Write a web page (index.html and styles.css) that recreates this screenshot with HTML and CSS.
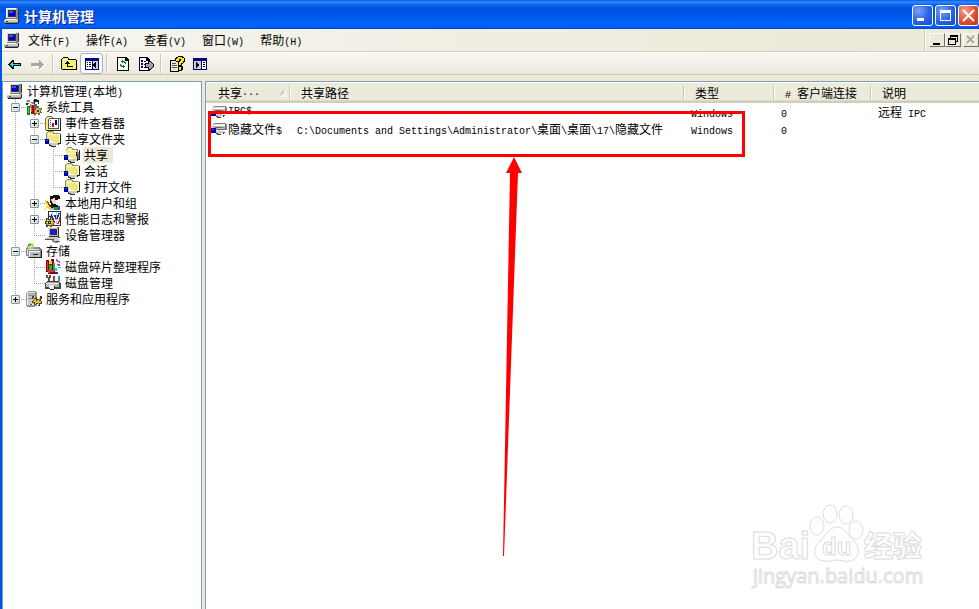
FILE: index.html
```
<!DOCTYPE html>
<html lang="zh-CN">
<head>
  <meta charset="UTF-8">
  <meta name="viewport" content="width=device-width, initial-scale=1.0">
  <title>计算机管理</title>
  <link rel="stylesheet" href="styles.css">
</head>
<body>

  <!-- 图标库 -->
  <svg class="sprite" aria-hidden="true">
    <defs>
      <symbol id="i-computer" viewBox="0 0 16 16">
        <path fill="#d4d0c8" d="M2 0h11v10H2z"/><path fill="#fff" d="M2 0h10v1H3v9H2z"/><path fill="#888" d="M12 1h2v9h-2z"/>
        <path fill="#333" d="M4 2h8v7H4zM14 1h1v9h-1z"/><path fill="#0000d8" d="M5 3h6v5H5z"/><path fill="#4848ff" d="M5 3h4v2H5z"/>
        <path fill="#777" d="M3 10h11v1H3z"/><path fill="#c8c8c8" d="M1 11h13v3H0v-2h1z"/><path fill="#fff" d="M1 11h11v1H1z"/><path fill="#888" d="M0 14h14v1H0z"/><path fill="#222" d="M14 11h1v4h-1zM1 15h13v1H1z"/><path fill="#008000" d="M2 13h2v1H2z"/>
      </symbol>
      <symbol id="i-tools" viewBox="0 0 16 16">
        <path fill="#888" d="M1 1h3v2h3V1h3v1H8v3H6v4H4V5H2V3H0V2h1z"/><path fill="#e4e4e4" d="M2 3h3v1h1v3H5V5H3z"/>
        <path fill="#222" d="M8 0h3v1h2v4h-1V3H9v3H8zM0 4h2v2H0z"/><path fill="#666" d="M8 5h3v4H8z"/><path fill="#008a20" d="M1 7h3v9H1z"/><path fill="#30e040" d="M2 8h1v6H2z"/>
        <path fill="#c00000" d="M5 6h3v9H5z"/><path fill="#ff4040" d="M5 6h1v7H5z"/><path fill="#665" d="M9 8h2V7h2v2h3v2h-1v2h1v1h-2v2h-2v-1h-2v1H8v-7h1z"/><path fill="#d8c040" d="M10 9h3v1h2v1h-1v3h-2v1h-1v-1H9v-3h1z"/><path fill="#333" d="M11 11h2v2h-2z"/>
      </symbol>
      <symbol id="i-events" viewBox="0 0 16 16">
        <path fill="#777" d="M2 1h5l1 2h7v1H1V2h1z"/><path fill="#f4ee70" d="M2 2h5l1 2h6v11H1V3h1z"/><path fill="#222" d="M15 3h1v13H1v-1h14z"/>
        <path fill="#777" d="M0 3h1v12H0z"/><path fill="#fff" d="M4 4h9v9H4z"/><path fill="#555" d="M3 4h1v9h9V4h1v10H3zM4 3h9v1H4zM5 5h1v1H5zM5 7h1v1H5zM5 9h1v1H5zM5 11h1v1H5z"/><path fill="#d00000" d="M7 8h2v4H7z"/><path fill="#0000c0" d="M10 5h2v5h-2z"/>
      </symbol>
      <symbol id="i-folder" viewBox="0 0 16 16">
        <path fill="#888" d="M3 0h5v1h1v1h6v1H1V2h1V1h1zM1 3h1v7H1z"/><path fill="#f0e878" d="M3 1h5v2h6v9H2V2h1z"/><path fill="#222" d="M15 3h1v10H7v-1h8z"/><path fill="#fff" d="M3 3h11v1H3z"/>
        <path fill="#0000a8" d="M0 8h4v5H0z"/><path fill="#2050ff" d="M1 9h2v1H1z"/><path fill="#c8c8c8" d="M4 10h3v1h3v1h3v2h-2v1H7v-1H5v-1H4z"/><path fill="#fff" d="M5 10h2v1h3v1H5z"/><path fill="#333" d="M4 13h1v1h2v1h4v1H6v-1H4zM13 13h1v1h-1z"/>
      </symbol>
      <symbol id="i-open" viewBox="0 0 16 16">
        <path fill="#888" d="M3 0h5v1h1v1h5v3h1v8H2V2h1z"/><path fill="#f0e878" d="M3 1h5v2h5v3H2V3h1zM1 7h12v5H3V9H1z"/><path fill="#fff" d="M0 6h12v1H0zM3 3h9v1H3z"/><path fill="#222" d="M12 5h1v3h1v4h1V3h1v10H8v-1h5V9h-1z"/>
        <path fill="#0000a8" d="M0 8h4v5H0z"/><path fill="#2050ff" d="M1 9h2v1H1z"/><path fill="#c8c8c8" d="M4 10h3v1h3v1h3v2h-2v1H7v-1H5v-1H4z"/><path fill="#fff" d="M5 10h2v1h3v1H5z"/><path fill="#333" d="M4 13h1v1h2v1h4v1H6v-1H4zM13 13h1v1h-1z"/>
      </symbol>
      <symbol id="i-users" viewBox="0 0 16 16">
        <path fill="#111" d="M5 1h3V0h6v1h1v3h-2v1h-2v5h2v3H3v-3h3V8H5z"/><path fill="#f0d8c0" d="M6 4h2V3h2v2h1v4H8V8H7V6H6z"/><path fill="#fff" d="M12 5h3v2h-1v3h-3V7h1z"/>
        <path fill="#c03020" d="M1 6h2v1h1v2h1v2h1v2H4v-2H3V9H2V7H1z"/><path fill="#f0e020" d="M0 5h1v1h1v2h1v2h1v2h2v2H3v-1H1v2H0v-2h1v-2h2v-1H1z"/><path fill="#00a040" d="M8 12h5v3H8z"/><path fill="#3040d0" d="M13 11h2v4h-2z"/><path fill="#bbb" d="M5 13h4v2H5z"/>
      </symbol>
      <symbol id="i-perf" viewBox="0 0 16 16">
        <path fill="#333" d="M3 0h13v15H7v-1H3z"/><path fill="#fff" d="M4 1h11v13H4z"/><path fill="#ccc" d="M4 4h11v1H4zM4 8h11v1H4zM7 1h1v12H7zM11 1h1v12h-1z"/>
        <path fill="#1030c0" d="M4 5h2V3h1v2h1v2h1V4h2v3h1V4h1V2h2v1h-1v3h-1v2h-3V6H9v3H7V6H4z"/><path fill="#e02020" d="M14 6h1v5h-1v2h-2v-1h1v-2h1z"/>
        <path fill="#443" d="M1 7h2v1h2V6h2v2h2v2h1v2H9v2H7v2H5v-1H3v1H1v-3H0v-3h1z"/><path fill="#e0c030" d="M2 8h1v1h3V7h1v2h1v2h1v1H8v2H6v1H5v-1H2v-2H1v-1h1z"/><path fill="#222" d="M3 10h3v3H3z"/><path fill="#fff" d="M4 11h1v1H4z"/>
      </symbol>
      <symbol id="i-device" viewBox="0 0 16 16">
        <path fill="#bbb" d="M3 0h10v9H3z"/><path fill="#eee" d="M3 0h9v1H4v8H3z"/><path fill="#333" d="M13 0h1v10H4V9h9zM5 2h7v6H5z"/><path fill="#1818e0" d="M5 3h6v4H5z"/><path fill="#c8c8c8" d="M2 10h11v2H0v-1h2z"/><path fill="#555" d="M0 12h10v1H0zM13 10h2v1h-2zM10 14h5v1h-5z"/><path fill="#ccc" d="M9 12h5v2H9z"/><path fill="#888" d="M7 13h2v1h2v1h2v1H9v-1H7z"/>
      </symbol>
      <symbol id="i-storage" viewBox="0 0 16 16">
        <path fill="#888" d="M1 3h5v1h8v1h1v1h1v9H2v-2H0V5h1z"/><path fill="#ddd" d="M1 6h12v1H2v5H1z"/><path fill="#bbb" d="M3 8h11v6H3z"/><path fill="#fff" d="M3 8h11v1H4v5H3z"/><path fill="#222" d="M15 7h1v8H3v-1h12zM7 11h5v1H7z"/>
        <circle cx="5" cy="3" r="3" fill="#d8d850"/><path fill="#30b050" d="M2 1h3v2H2z"/><path fill="#50d0e0" d="M5 4h3v2H5z"/><path fill="#fff" d="M4 3h2v1H4z"/><path fill="#00e000" d="M12 10h1v1h-1z"/>
      </symbol>
      <symbol id="i-defrag" viewBox="0 0 16 16">
        <path fill="#900000" d="M1 1h3v2h2V0h3v4h1v11H3v-2H1z"/><path fill="#e83030" d="M2 2h1v9h2v3H3v-2H2zM5 11h4v2H5z"/><path fill="#e8d020" d="M4 2h3v3H4z"/><path fill="#20b030" d="M4 6h3v5H4zM8 4h2v6H8z"/><path fill="#222" d="M7 6h1v5H7z"/>
        <path fill="#20c0d0" d="M9 9h3v3H9zM13 8h3v1h-3z"/><path fill="#c030c0" d="M11 0h1v1h1v1h2v2h-1V3h-2V2h-1zM12 5h3v2h-2V6h-1z"/><path fill="#2030b0" d="M10 13h3v2h-3z"/>
      </symbol>
      <symbol id="i-disk" viewBox="0 0 16 16">
        <path fill="#555" d="M1 0h2v2h1V0h2v3H5v4H3V3H1z"/><path fill="#c03030" d="M8 1h2v5H8z"/><path fill="#20a0a0" d="M13 1h2v5h-2z"/><path fill="#444" d="M2 6h12v1h1v1h1v6H0V8h1V7h1z"/><path fill="#999" d="M2 7h12v1H2z"/><path fill="#bbb" d="M1 8h13v4H1z"/><path fill="#eee" d="M1 8h12v1H1zM4 10h5v4H5v-1H4z"/><path fill="#222" d="M5 14h4v1H5zM9 11h1v3H9z"/><path fill="#00d000" d="M12 10h1v1h-1z"/>
      </symbol>
      <symbol id="i-services" viewBox="0 0 16 16">
        <path fill="#999" d="M2 0h8v1h1v14H0V2h1V1h1z"/><path fill="#eee" d="M2 1h7v1H1v12h8v-1H2V2H1z"/><path fill="#c8c8c8" d="M2 3h7v10H2z"/><path fill="#888" d="M2 4h7v1H2zM2 7h7v1H2zM9 2h1v13H9zM1 15h8v1H1z"/><path fill="#e02020" d="M4 13h2v1H4z"/>
        <path fill="#443" d="M6 5h2v2h2V6h1v2h3V5h2v3h-1v2h1v3h-2v2h-2v-2h-2v1H8v-2H6v-2h1V8H6z"/><path fill="#e0c030" d="M7 7h1v1h2v2h1V9h2V7h1v2h-1v1h2v2h-2v2h-1v-2h-2v1H9v-2H7v-1h1V9H7z"/>
      </symbol>
      <symbol id="i-share" viewBox="0 0 16 16">
        <path fill="#888" d="M3 2h12v1h1v6H1V4h1V3h1z"/><path fill="#e4e4e4" d="M3 3h11v1H2z"/><path fill="#c0c0c0" d="M1 5h13v4H1z"/><path fill="#fff" d="M1 4h13v1H1z"/><path fill="#666" d="M4 6h7v1H4zM14 4h1v5H5V8h9z"/><path fill="#00c000" d="M12 6h1v1h-1z"/><path fill="#0000a8" d="M0 7h5v5H0z"/><path fill="#2050ff" d="M1 8h2v1H1z"/><path fill="#c8c8c8" d="M5 9h4v1h3v2h-2v1H7v-1H5z"/><path fill="#fff" d="M5 9h3v1H5z"/><path fill="#444" d="M5 12h2v1h3v1H6v-1H5zM12 11h2v1h-1v1h-1z"/>
      </symbol>
      <symbol id="i-back" viewBox="0 0 16 16">
        <path fill="#000" d="M1 8h1V7h1V6h1V5h1V4h2v3h7v3H7v3H5v-1H4v-1H3v-1H2V9H1z"/><path fill="#00e8e8" d="M3 8h1V7h1V6h1v2h7v1H6v2H5v-1H4V9H3z"/>
      </symbol>
      <symbol id="i-forward" viewBox="0 0 16 16">
        <path fill="#fff" d="M2 8h8V5h2l3 4-4 5H9v-3H2z"/><path fill="#aca899" d="M14 8h-1V7h-1V6h-1V5h-1V4H9v3H1v3h8v3h1v-1h1v-1h1v-1h1V9h1z"/>
      </symbol>
      <symbol id="i-up" viewBox="0 0 16 16">
        <path fill="#000" d="M1 2h1V1h5v1h1v1h7v1h1v10H1v-1H0V3h1z"/><path fill="#f8f46a" d="M2 2h5v2h8v9H1V3h1z"/><path fill="#fff" d="M2 3h4v1H2z"/><path fill="#000" d="M6 5h1v1h1v1h1v1H7v2h5v1H6V8H4V7h1V6h1z"/>
      </symbol>
      <symbol id="i-tree" viewBox="0 0 16 16">
        <path fill="#000080" d="M1 2h14v12H1z"/><path fill="#fff" d="M2 5h6v8H2z"/><path fill="#d4d0c8" d="M9 5h5v8H9z"/><path fill="#000" d="M3 6h1v1H3zM5 6h2v1H5zM3 8h1v1H3zM5 8h2v1H5zM3 10h1v1H3zM5 10h2v1H5zM12 6v6h-1v-1h-1v-1H9V8h1V7h1V6z"/>
      </symbol>
      <symbol id="i-refresh" viewBox="0 0 16 16">
        <path fill="#000" d="M2 1h9l3 3v11H2z"/><path fill="#fff" d="M3 2h7v3h3v9H3z"/><path fill="#000" d="M11 2h1v1h1v1h-2z"/><path fill="#008020" d="M7 4h1v1h2v1h1v2h-1V7H9V6H8v1H7V6H6V5h1zM5 8h1v1h1v1h1V9h1v1h1v1H9v1H8v-1H6v-1H5z"/>
      </symbol>
      <symbol id="i-export" viewBox="0 0 16 16">
        <path fill="#000" d="M1 1h8l3 3v11H1z"/><path fill="#fff" d="M2 2h6v3h3v9H2z"/><path fill="#000080" d="M3 4h2v2H3zM3 7h2v2H3zM3 10h2v2H3zM6 5h2v1H6zM6 8h3v1H6zM6 11h3v1H6z"/><path fill="#000" d="M7 7h3V5h2l4 4v2l-4 3h-2v-2H7z"/><path fill="#a0a0a0" d="M8 8h3V6h1l3 3v1l-3 3h-1v-2H8z"/>
      </symbol>
      <symbol id="i-help" viewBox="0 0 16 16">
        <path fill="#000" d="M1 4h9v12H1z"/><path fill="#e8e4d8" d="M2 5h7v10H2z"/><path fill="#555" d="M3 7h4v1H3zM3 9h5v1H3zM3 11h5v1H3z"/><path fill="#000" d="M7 1h2V0h5v1h1v1h1v4h-1v1h-1v1h-1v2h1v4h-1v1h-4v-5h1V7h2V5h-1v1H7V5H6V2h1z"/><path fill="#ffee00" d="M8 2h1V1h4v1h2v3h-1v2h-2v2h-2V7h1V6h1V3h-2v2H7V3h1zM10 11h2v3h-2z"/>
      </symbol>
      <symbol id="i-pane" viewBox="0 0 16 16">
        <path fill="#000080" d="M1 2h14v12H1z"/><path fill="#d4d0c8" d="M2 5h7v8H2z"/><path fill="#fff" d="M10 5h4v8h-4z"/><path fill="#000" d="M11 6h2v1h-2zM11 8h2v1h-2zM11 10h2v1h-2zM4 6h1v1h1v1h1v2H6v1H5v1H4z"/>
      </symbol>
    </defs>
  </svg>

  <div class="window">
    <header class="titlebar">
      <svg class="icon"><use href="#i-computer"/></svg>
      <h1>计算机管理</h1>
      <div class="caption-buttons">
        <button type="button" aria-label="最小化"><svg viewBox="0 0 21 21"><path fill="#fff" d="M5 13h7v3H5z"/></svg></button>
        <button type="button" aria-label="最大化"><svg viewBox="0 0 21 21"><path fill="#fff" fill-rule="evenodd" d="M5 5h11v11H5zm1 3v7h9V8z"/></svg></button>
        <button type="button" class="close" aria-label="关闭"><svg class="smooth" viewBox="0 0 21 21"><path stroke="#fff" stroke-width="2" d="M5 5l11 11M16 5L5 16"/></svg></button>
      </div>
    </header>

    <nav class="menubar">
      <svg class="icon"><use href="#i-computer"/></svg>
      <div class="menus">
        <button type="button">文件<span class="en">(F)</span></button>
        <button type="button">操作<span class="en">(A)</span></button>
        <button type="button">查看<span class="en">(V)</span></button>
        <button type="button">窗口<span class="en">(W)</span></button>
        <button type="button">帮助<span class="en">(H)</span></button>
      </div>
      <div class="mdi-buttons">
        <button type="button" aria-label="最小化子窗口"><svg viewBox="0 0 14 14"><path d="M3 10h7v2H3z"/></svg></button>
        <button type="button" aria-label="还原子窗口"><svg viewBox="0 0 14 14"><path fill-rule="evenodd" d="M4 2h8v7h-2v3H2V5h2zm1 2v1h5v3h1V4zM3 7v4h6V7z"/></svg></button>
        <button type="button" class="mdi-close" aria-label="关闭子窗口" disabled><svg class="smooth" viewBox="0 0 14 14"><path stroke="#fff" stroke-width="2" d="M4 4l7 7M11 4l-7 7"/><path stroke="#aca899" stroke-width="2" d="M3 3l7 7M10 3l-7 7"/></svg></button>
      </div>
    </nav>

    <div class="toolbar">
      <button type="button" aria-label="后退"><svg class="icon"><use href="#i-back"/></svg></button>
      <button type="button" aria-label="前进" disabled><svg class="icon"><use href="#i-forward"/></svg></button>
      <span class="sep"></span>
      <button type="button" aria-label="向上"><svg class="icon"><use href="#i-up"/></svg></button>
      <button type="button" class="active" aria-label="显示/隐藏控制台树"><svg class="icon"><use href="#i-tree"/></svg></button>
      <span class="sep"></span>
      <button type="button" aria-label="刷新"><svg class="icon"><use href="#i-refresh"/></svg></button>
      <button type="button" aria-label="导出列表"><svg class="icon"><use href="#i-export"/></svg></button>
      <span class="sep"></span>
      <button type="button" aria-label="帮助"><svg class="icon"><use href="#i-help"/></svg></button>
      <button type="button" aria-label="显示/隐藏操作窗格"><svg class="icon"><use href="#i-pane"/></svg></button>
    </div>

    <div class="panes">
      <!-- 控制台树 -->
      <aside class="tree">
        <div class="node"><svg class="icon"><use href="#i-computer"/></svg><span class="label">计算机管理<span class="en">(</span>本地<span class="en">)</span></span></div>
        <ul>
          <li>
            <div class="node"><span class="branch"><button type="button" class="toggle" aria-label="折叠"></button></span><svg class="icon"><use href="#i-tools"/></svg><span class="label">系统工具</span></div>
            <ul>
              <li><div class="node"><span class="branch"><button type="button" class="toggle plus" aria-label="展开"></button></span><svg class="icon"><use href="#i-events"/></svg><span class="label">事件查看器</span></div></li>
              <li>
                <div class="node"><span class="branch"><button type="button" class="toggle" aria-label="折叠"></button></span><svg class="icon"><use href="#i-folder"/></svg><span class="label">共享文件夹</span></div>
                <ul>
                  <li><div class="node"><span class="branch"></span><svg class="icon"><use href="#i-open"/></svg><span class="label selected">共享</span></div></li>
                  <li><div class="node"><span class="branch"></span><svg class="icon"><use href="#i-folder"/></svg><span class="label">会话</span></div></li>
                  <li><div class="node"><span class="branch"></span><svg class="icon"><use href="#i-folder"/></svg><span class="label">打开文件</span></div></li>
                </ul>
              </li>
              <li><div class="node"><span class="branch"><button type="button" class="toggle plus" aria-label="展开"></button></span><svg class="icon"><use href="#i-users"/></svg><span class="label">本地用户和组</span></div></li>
              <li><div class="node"><span class="branch"><button type="button" class="toggle plus" aria-label="展开"></button></span><svg class="icon"><use href="#i-perf"/></svg><span class="label">性能日志和警报</span></div></li>
              <li><div class="node"><span class="branch"></span><svg class="icon"><use href="#i-device"/></svg><span class="label">设备管理器</span></div></li>
            </ul>
          </li>
          <li>
            <div class="node"><span class="branch"><button type="button" class="toggle" aria-label="折叠"></button></span><svg class="icon"><use href="#i-storage"/></svg><span class="label">存储</span></div>
            <ul>
              <li><div class="node"><span class="branch"></span><svg class="icon"><use href="#i-defrag"/></svg><span class="label">磁盘碎片整理程序</span></div></li>
              <li><div class="node"><span class="branch"></span><svg class="icon"><use href="#i-disk"/></svg><span class="label">磁盘管理</span></div></li>
            </ul>
          </li>
          <li><div class="node"><span class="branch"><button type="button" class="toggle plus" aria-label="展开"></button></span><svg class="icon"><use href="#i-services"/></svg><span class="label">服务和应用程序</span></div></li>
        </ul>
      </aside>

      <!-- 共享列表 -->
      <main class="list">
        <table>
          <colgroup>
            <col class="col-name"><col class="col-path"><col class="col-type"><col class="col-clients"><col>
          </colgroup>
          <thead>
            <tr>
              <th scope="col"><span class="sorted">共享<span class="en">...</span><svg class="sort smooth" viewBox="0 0 9 8"><path fill="none" stroke="#aca899" d="M1 7L5 1"/><path fill="none" stroke="#fff" d="M5 1l3 6H1"/></svg></span></th>
              <th scope="col">共享路径</th>
              <th scope="col">类型</th>
              <th scope="col"><span class="en"># </span>客户端连接</th>
              <th scope="col">说明</th>
            </tr>
          </thead>
          <tbody>
            <tr>
              <td><span class="name"><svg class="icon"><use href="#i-share"/></svg><span class="en">IPC$</span></span></td>
              <td></td>
              <td><span class="en">Windows</span></td>
              <td><span class="en">0</span></td>
              <td>远程<span class="en"> IPC</span></td>
            </tr>
            <tr>
              <td><span class="name"><svg class="icon"><use href="#i-share"/></svg><span>隐藏文件<span class="en">$</span></span></span></td>
              <td><span class="en">C:\Documents and Settings\Administrator\</span>桌面<span class="en">\</span>桌面<span class="en">\17\</span>隐藏文件</td>
              <td><span class="en">Windows</span></td>
              <td><span class="en">0</span></td>
              <td></td>
            </tr>
          </tbody>
        </table>

        <!-- 标注 -->
        <div class="mark-box"></div>
        <svg class="mark-arrow smooth" viewBox="0 0 24 400"><path fill="#f00" d="M12 0l8 16h-4L2 399H1L8 16H4z"/></svg>

        <svg class="watermark smooth" viewBox="0 0 180 90">
          <g class="wm-shape">
            <ellipse cx="67" cy="23" rx="7" ry="9"/>
            <ellipse cx="80" cy="11" rx="7" ry="9"/>
            <ellipse cx="96" cy="12" rx="7" ry="9"/>
            <ellipse cx="106" cy="27" rx="7" ry="9"/>
            <path d="M87 24c8 0 10 8 16 13 8 7 7 20-4 21-5 1-8-1-12-1s-8 2-13 1c-11-1-12-13-4-20 6-5 9-14 17-14z"/>
          </g>
          <text class="wm-logo" x="1" y="56">Bai</text>
          <text class="wm-du" x="72" y="52">du</text>
          <text class="wm-cjk" x="114" y="54">经验</text>
          <text class="wm-url" x="3" y="80">jingyan.baidu.com</text>
        </svg>
      </main>
    </div>
  </div>

</body>
</html>
```

FILE: styles.css
```
/* --- 基础 --- */
:root {
  --face: #ece9d8;
  --frame: #0055e5;
  --pane-border: #7f9db9;
  --dots: #a0a0a0;
  --cjk: "Noto Sans CJK SC", sans-serif;
}
*, *::before, *::after { box-sizing: border-box; }
body {
  margin: 0; font: 12px/16px var(--cjk); color: #000;
  background: var(--face); overflow: hidden;
}
button { padding: 0; border: 0; background: none; font: inherit; color: inherit; }
svg { display: block; shape-rendering: crispEdges; }
.smooth { shape-rendering: auto; }
.sprite { position: absolute; width: 0; height: 0; }
.icon { width: 16px; height: 16px; flex: none; }
/* 半角字符宽 6px */
.en { font-family: "Liberation Mono", monospace; font-size: 10px; line-height: 10px; white-space: pre; }

.window { display: flex; flex-direction: column; height: 100vh; }

/* --- 标题栏 --- */
.titlebar {
  display: flex; align-items: center; gap: 4px; flex: none;
  height: 29px; padding: 2px 0 0 4px; color: #fff;
  background: linear-gradient(#0a5be0 0, #2f8bff 2px, #0a5ee8 5px, #0053e1 10px, #0058ee 18px, #0066ff 24px, #0060f8 27px, #0040c0 29px);
}
.titlebar h1 {
  flex: 1; margin: 0; font-size: 14px; line-height: 20px; font-weight: 700;
  text-shadow: 1px 1px #0a1883;
}
.caption-buttons { display: flex; gap: 2px; }
.caption-buttons button {
  width: 21px; height: 21px; border: 1px solid #fff; border-radius: 3px;
  background: radial-gradient(circle at 30% 25%, #7ba2f5, #2a62e6 55%, #1348cc);
}
.caption-buttons svg { width: 21px; height: 21px; margin: -1px; }
.caption-buttons .close { background: radial-gradient(circle at 30% 25%, #f0a088, #e05030 55%, #c03010); }

/* --- 菜单栏 --- */
.menubar {
  display: flex; align-items: center; flex: none; height: 23px; padding-left: 2px;
  margin-left: 2px; border-bottom: 1px solid #d8d2bd;
  background: linear-gradient(90deg, #f6f5f0, var(--face) 90%);
}
.menus { display: flex; flex: 1; gap: 16px; padding-left: 8px; }
.mdi-buttons {
  display: flex; align-items: center; align-self: stretch; padding-left: 3px;
  border-left: 1px solid #fff; box-shadow: -1px 0 #d0ccb8;
}
.mdi-buttons button {
  width: 16px; height: 14px; background: var(--face);
  border: 1px solid; border-color: #fff #716f64 #716f64 #fff;
}
.mdi-buttons svg { width: 14px; height: 14px; margin-top: -1px; }
.mdi-buttons .mdi-close { margin-left: 2px; }

/* --- 工具栏 --- */
.toolbar {
  display: flex; align-items: center; flex: none; height: 23px; padding-left: 1px;
  margin-left: 2px; border-top: 1px solid #fff; border-bottom: 1px solid #d0ccba;
  background: linear-gradient(#f7f6f0, #ece9dc);
}
.toolbar button { display: grid; place-items: center; width: 23px; height: 21px; border-radius: 3px; }
.toolbar .active { background: #fff; border: 1px solid #98b5d0; }
.sep { width: 2px; height: 19px; margin: 0 3px; border-left: 1px solid #c9c6b4; border-right: 1px solid #fff; }

/* --- 窗格 --- */
.panes {
  display: grid; grid-template-columns: 200px 1fr; gap: 3px; flex: 1; min-height: 0;
  padding: 6px 0 0 2px; background: linear-gradient(90deg, var(--frame) 2px, var(--face) 2px);
}
.menubar, .toolbar { box-shadow: -2px 0 var(--frame); }

/* --- 控制台树 --- */
.tree {
  padding: 1px 0 0 4px; background: #fff;
  border: 1px solid var(--pane-border); border-bottom: 0;
}
.tree ul { margin: 0; padding: 0; list-style: none; }
.tree li {
  padding-left: 19px;
  background: repeating-linear-gradient(var(--dots) 0 1px, transparent 1px 2px) 8px 0 / 1px 100% no-repeat;
}
.tree li:last-child { background-size: 1px 8px; }
.node { display: flex; align-items: center; height: 16px; white-space: nowrap; }
.tree li > .node { margin-left: -19px; }
.branch {
  display: flex; align-items: center; width: 19px; height: 16px; padding-left: 4px; flex: none;
  background: repeating-linear-gradient(90deg, var(--dots) 0 1px, transparent 1px 2px) 8px 8px / 11px 1px no-repeat;
}
.toggle {
  width: 9px; height: 9px; border: 1px solid #7898b5; border-radius: 1px;
  background:
    linear-gradient(#000, #000) center / 5px 1px no-repeat,
    linear-gradient(135deg, #fff, #d8d2c4);
}
.toggle.plus {
  background:
    linear-gradient(#000, #000) center / 5px 1px no-repeat,
    linear-gradient(#000, #000) center / 1px 5px no-repeat,
    linear-gradient(135deg, #fff, #d8d2c4);
}
.label { margin-left: 3px; padding: 0 5px 0 1px; }
.label.selected { background: var(--face); }

/* --- 列表 --- */
.list {
  position: relative; min-width: 0; overflow: hidden; background: #fff;
  border: 1px solid var(--pane-border); border-width: 1px 0 0 1px;
}
.list table { width: 100%; table-layout: fixed; border-collapse: separate; border-spacing: 0; }
.col-name { width: 85px; }
.col-path { width: 394px; }
.col-type { width: 90px; }
.col-clients { width: 97px; }
.list th {
  height: 21px; padding: 0 0 0 10px; font-weight: 400; text-align: left; white-space: nowrap;
  background:
    linear-gradient(#c9c6b4, #c9c6b4) right 1px center / 1px 14px no-repeat,
    linear-gradient(#fff, #fff) right center / 1px 14px no-repeat,
    linear-gradient(#fff 0 1px, #ebeadb 1px 18px, #dedbc9 18px, #cbc7b8);
}
.list th:last-child { background: linear-gradient(#fff 0 1px, #ebeadb 1px 18px, #dedbc9 18px, #cbc7b8); }
.sorted { display: flex; align-items: center; padding: 0 3px 0 2px; }
.sort { width: 9px; height: 8px; margin-left: auto; }
.list td { height: 17px; padding: 0 0 0 6px; line-height: 17px; white-space: nowrap; }
.list td:first-child { padding-left: 5px; }
.name { display: flex; align-items: center; gap: 1px; }

/* --- 标注与水印 --- */
.mark-box {
  position: absolute; left: 2px; top: 29px; width: 537px; height: 46px;
  border: 3px solid #f00;
}
.mark-arrow { position: absolute; left: 296px; top: 75px; width: 24px; height: 400px; }
.watermark { position: absolute; right: 49px; bottom: 16px; width: 180px; height: 90px; }
.watermark text, .wm-shape { fill: #fff; stroke: #dcdcdc; stroke-width: 1px; }
.wm-logo { font: 700 38px "Liberation Sans", sans-serif; }
.wm-du { font: 700 24px "Liberation Sans", sans-serif; }
.wm-cjk { font: 900 29px var(--cjk); }
.wm-url { font: 20px "Open Sans", sans-serif; }
```
